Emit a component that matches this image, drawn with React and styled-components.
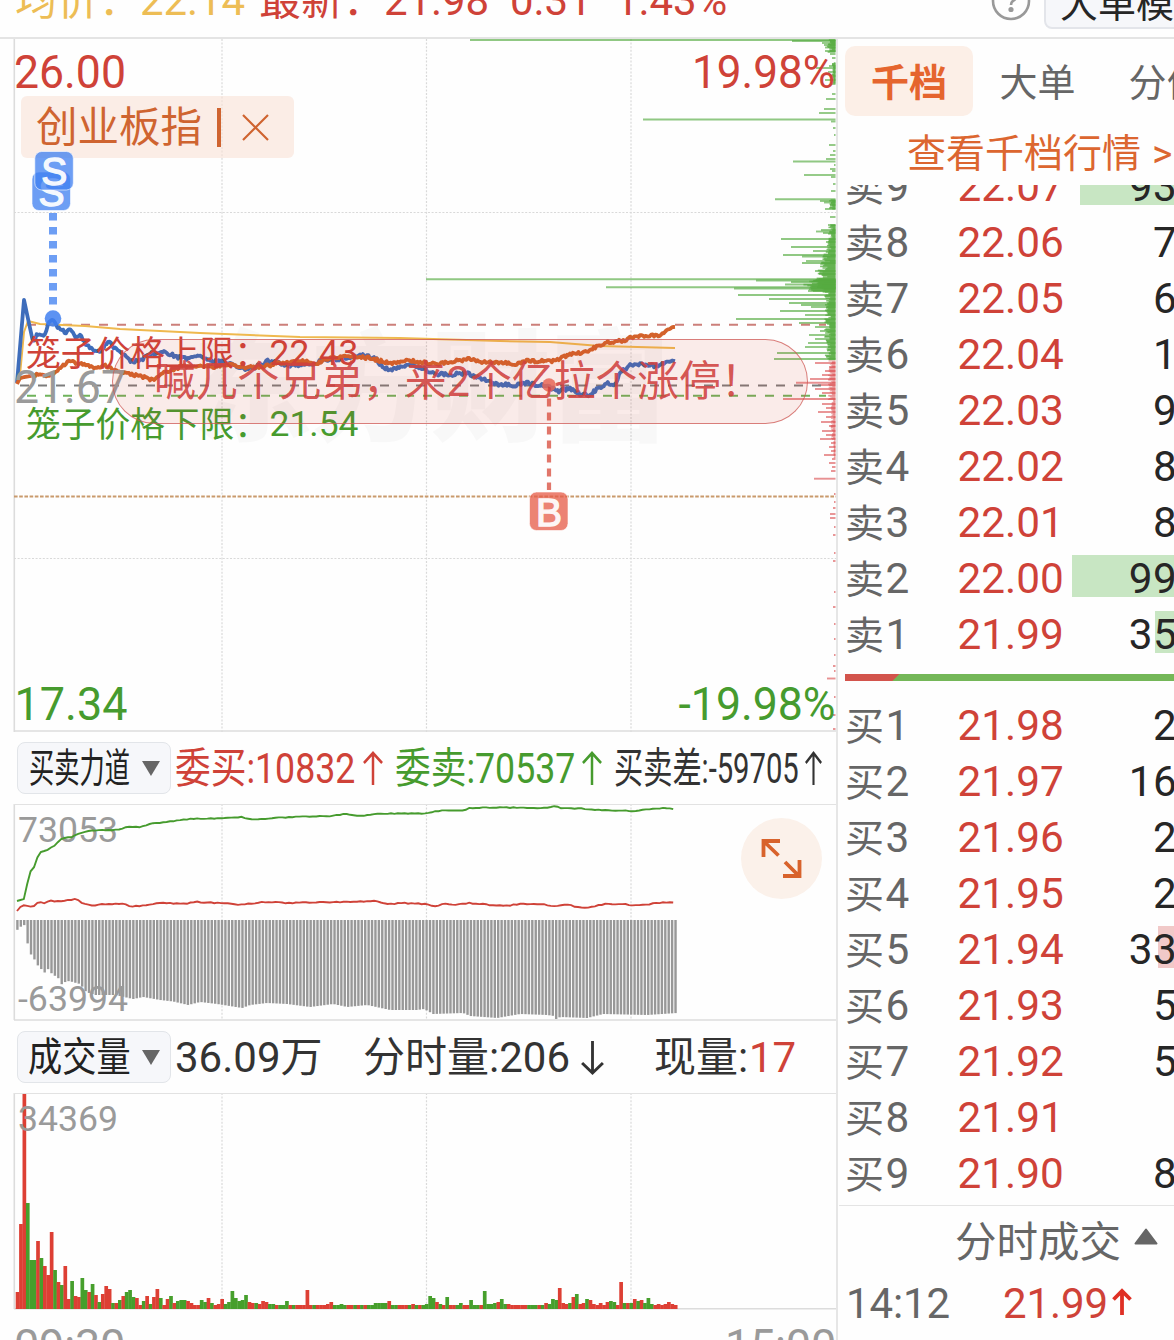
import React from "react";
import styled, { createGlobalStyle, css } from "styled-components";

const RED = "#cf4238";
const GREEN = "#469b2e";
const ORANGE = "#d8632c";
const GREY = "#9a9a9a";

const GlobalStyle = createGlobalStyle`
  * {
    box-sizing: border-box;
  }

  body {
    margin: 0;
    background: #fefefe;
    font-family: Roboto, "Noto Sans CJK SC", sans-serif;
    overflow: hidden;
  }
`;

/* ---------- data ---------- */

const toPoints = (text) => text.split(" ").map((p) => p.split(",").map(Number));

const priceLine = toPoints(
  "17,383 24,300 33,342 37,335 44,336 49,321 53,318 58,328 66,333 70,330 75,337 80,334 86,345 95,351 102,350 108,341 114,347 122,352 130,361 140,361 150,354 165,352 178,357 186,359 197,355 210,361 222,362 235,366 248,369 262,365 268,361 290,366 310,364 330,359 345,359 360,355 375,358 382,366 390,371 400,367 412,364 427,370 435,374 450,375 465,373 480,378 498,384 515,385 525,383 540,385 549,387 558,391 570,389 580,394 590,395 597,389 607,383 616,384 621,371 633,364 647,364 655,366 665,362 675,360"
);
const indexLine = toPoints(
  "17,384 20,378 35,375 50,375 58,370 68,362 80,363 95,368 104,365 112,369 130,374 140,376 152,380 165,372 180,367 197,366 215,367 230,365 245,367 262,367 275,364 300,361 318,363 330,358 345,356 370,358 392,364 407,360 420,362 440,364 455,361 472,359 480,362 500,362 517,364 525,361 553,361 572,354 585,352 607,342 622,341 635,336 660,335 668,329 675,326"
);
const averageLine = "20,375 24,332 28,321 40,324 85,326 120,329 200,333 300,337 400,338 500,341 550,342 600,346 675,348";
const sellForce = toPoints(
  "17,901 24,899 27,885 30,872 35,866 38,855 42,851 48,850 55,845 62,838 72,837 80,833 90,831 105,830 115,830 128,827 140,827 152,823 160,823 190,819 230,818 243,817 246,819 262,819 290,817 330,816 345,814 360,816 380,813.5 426,813.5 435,811 455,810.5 462,811 470,808 500,807.5 540,808 552,807 556,805 560,808.5 580,808.5 600,810 635,811 650,809 665,808 675,809"
);
const buyForce = toPoints(
  "17,911 22,905 33,907 38,902 45,903 50,901 60,901 77,899 82,903 92,906 105,904 115,904 123,903 130,907 145,905 160,903 185,904 195,902 220,903 240,905 262,902 290,903 330,902 345,902 375,901 390,904 400,903 426,904 435,906 445,904 455,905 470,903 490,905 505,906 520,904 545,904 550,906 570,905 580,908 590,907 605,904 620,904 632,905 645,905 655,903 675,902"
);
const forceGap = toPoints(
  "17,930 20,927 24,925 27,942 31,955 34,959 38,966 41,969 45,973 48,969 51,973 55,976 58,978 62,985 65,982 69,981 76,983 80,984 83,988 86,992 95,995 105,995 115,995 133,999 143,997 160,1000 173,1001.5 188,1005 200,1002 217,1004 242,1008 250,1005 267,1003 287,1004 310,1007 333,1004 347,1007 367,1005 390,1010 417,1010 424,1009 433,1014 463,1013 470,1016 497,1018 520,1014 547,1015 554,1016 556,1019 560,1017 587,1018 603,1014 647,1015 677,1013"
);

const volumeBars = (
  "r17 r85 r215 g106 g49 g49 r68 g51 r43 r34 r77 g39 r27 g24 r43 r10 g28 r13 r12 g31 g19 r17 g25 r14 g7 r15 r23 r20 g6 r6 " +
  "g9 r13 g17 g19 g12 r11 r4 g8 r13 g5 r12 r20 g11 r4 r10 g13 r6 g8 g9 g9 r8 r6 r4 r4 g9 g7 r11 g6 r4 r5 " +
  "r10 g5 g7 g18 g11 g8 g9 g14 r7 r6 g6 r5 r8 r7 g5 g5 r4 g4 g4 g8 r4 g4 r4 r4 r4 r19 r4 g4 r4 r4 " +
  "r4 r5 r7 g4 g4 g5 g4 r4 r4 g4 r4 g4 r4 g4 g4 g6 g6 g6 g6 r8 g4 g4 r4 r4 r4 g4 r5 g4 r4 g4 " +
  "g5 g13 g11 r7 g5 r4 g12 r4 r4 g4 g6 r4 r4 g9 g4 g4 r4 g18 g5 g5 g6 r7 g10 g5 r5 r4 r4 r4 r4 r4 " +
  "g4 g4 g4 r4 g4 r6 g5 g10 g9 r21 r6 r5 g6 r12 g15 r5 r6 g10 r9 r5 r4 r6 r4 r7 g8 g7 r4 r27 g6 r6 " +
  "g6 r10 g8 r9 g6 g11 g5 r4 r5 r4 r5 r7 r5 r4"
).split(" ");

// [y, left edge] of the longest resting orders
const sellDepth = toPoints(
  "40,470 41,792 43,822 45,824 47.5,825 51,825 54,830 58,832 66,829 68,816 72,828 76,831 80,825 84,832 94,832 99,826 109,824 113,819 119.5,643 121.5,831 128,833 135,834 145,829 151,833 155,830 159,826 161.5,793 165,834 169,830 171,832 175,804 177,831 184,833 191,831 199.3,775 201,820 202.5,824 205,832 209,825 217,830 225,828 230,821 231.5,816 233,823 239,781 242,826 247,791 251,813 255,783 256.5,802 261,806 263,802 271,815 274,819 279.3,426 280.5,756 282,791 284.5,785 287.3,606 288.5,734 291,808 295,738 299,769 303,789 305,801 307,811 311,780 315,805 319,736 323,799 327,815 331,820 335,809 339,815 343,808 347,805 353,777 359,774"
);
const buyDepth = toPoints(
  "363,815 367,829 371,825 375,822 379,810 382.7,796 385,818 389,815 393,822 399,783 404,822 408,826 412,818 417,826 422,821 426,829 431,822 435,826 439,820 443,831 447,829 451,831 455,824 459,832 463,829 467,832 471,831 478.7,814 494,834 502,834 508,833 514,830 518,830 527,834 535,833 553,834 561,833 592,834 607,833 624,834 639,834 655,834 666,833 671,834 678.5,827 697,834 715,833 729,833"
);

const noise = (n) => {
  const v = Math.sin(n * 12.9898) * 43758.5453;
  return v - Math.floor(v);
};

const valueAt = (points, x) => {
  const i = points.findIndex((p) => p[0] >= x);
  if (i <= 0) return points[i === 0 ? 0 : points.length - 1][1];
  const [x0, y0] = points[i - 1];
  const [x1, y1] = points[i];
  return y0 + ((x - x0) / (x1 - x0)) * (y1 - y0);
};

// Adds tick-by-tick wobble between the key points of a line
const ticks = (points, step, size) => {
  const out = [];
  for (let x = 17; x <= 676; x += step) {
    const wobble = x < 34 ? 0 : (noise(x) - 0.5) * size;
    out.push(`${x.toFixed(1)},${(valueAt(points, x) + wobble).toFixed(1)}`);
  }
  return out.join(" ");
};

const smallOrders = (from, to, width) => {
  const rows = [];
  for (let y = from; y < to; y += 0.8) {
    rows.push([y, 835 - width(y) * (0.4 + noise(y) * 0.8)]);
  }
  return rows;
};

const sellFill = [
  ...smallOrders(40, 52, () => 7),
  ...smallOrders(63, 83, () => 3),
  ...smallOrders(200, 209, () => 5),
  ...smallOrders(225, 240, () => 6),
  ...smallOrders(240, 279, (y) => 7 + (y - 240) * 0.25),
  ...smallOrders(279, 292, () => 27),
  ...smallOrders(280, 290, () => 24),
  ...smallOrders(292, 325, () => 9),
  ...smallOrders(325, 360, () => 9),
];
const buyFill = [
  ...smallOrders(361, 400, () => 6),
  ...smallOrders(400, 440, () => 3.5),
  ...smallOrders(440, 458, () => 1.5),
];

const sellOrders = [
  { level: 9, price: "22.07", qty: "93", bar: 94 },
  { level: 8, price: "22.06", qty: "7" },
  { level: 7, price: "22.05", qty: "6" },
  { level: 6, price: "22.04", qty: "1" },
  { level: 5, price: "22.03", qty: "9" },
  { level: 4, price: "22.02", qty: "8" },
  { level: 3, price: "22.01", qty: "8" },
  { level: 2, price: "22.00", qty: "99", bar: 102 },
  { level: 1, price: "21.99", qty: "35", bar: 19 },
];
const buyOrders = [
  { level: 1, price: "21.98", qty: "2" },
  { level: 2, price: "21.97", qty: "16" },
  { level: 3, price: "21.96", qty: "2" },
  { level: 4, price: "21.95", qty: "2" },
  { level: 5, price: "21.94", qty: "33", bar: 16 },
  { level: 6, price: "21.93", qty: "5" },
  { level: 7, price: "21.92", qty: "5" },
  { level: 8, price: "21.91", qty: "" },
  { level: 9, price: "21.90", qty: "8" },
];

/* ---------- styles ---------- */

const Page = styled.div`
  width: 1174px;
  height: 1340px;
  display: flex;
  flex-direction: column;
  overflow: hidden;
`;

const TopBar = styled.header`
  height: 39px;
  flex: none;
  display: flex;
  align-items: flex-start;
  border-bottom: 2px solid #e4e4e4;
  overflow: hidden;
`;

const QuoteLine = styled.div`
  width: 991px;
  flex: none;
  padding-left: 15px;
  display: grid;
  grid-template-columns: 125px 119px 125px 126px 105px auto;
  margin-top: -32px;
  font-size: 42px;
  line-height: 65px;
  letter-spacing: -0.1px;
  white-space: nowrap;
  color: ${RED};
`;

const Average = styled.span`
  color: #edbd55;
`;

const HelpIcon = styled.svg`
  flex: none;
  width: 40px;
  height: 40px;
  margin-top: -19px;
`;

const ModeButton = styled.div`
  flex: none;
  width: 180px;
  height: 60px;
  margin: -31px 0 0 13px;
  padding-left: 14px;
  background: #f6f7fa;
  border: 2px solid #e3e5ea;
  border-radius: 8px;
  color: #262626;
  font-size: 38px;
  line-height: 66px;
  white-space: nowrap;
`;

const Body = styled.div`
  flex: 1;
  min-height: 0;
  display: flex;
`;

const Charts = styled.main`
  width: 836px;
  flex: none;
  display: flex;
  flex-direction: column;
`;

const ChartBox = styled.section`
  position: relative;
  flex: none;
  height: ${(p) => p.$height}px;

  > svg {
    display: block;
  }
`;

const Chip = styled.div`
  position: absolute;
  left: 21px;
  top: 57px;
  width: 273px;
  height: 62px;
  padding-left: 15px;
  display: flex;
  align-items: center;
  background: rgba(248, 225, 213, 0.6);
  border-radius: 6px;
  color: #cf6430;
  font-size: 41.5px;
  line-height: 60px;

  span {
    padding-top: 2px;
  }
`;

const ChipBar = styled.i`
  width: 4px;
  height: 39px;
  margin: 0 21px 0 15px;
  background: #cf6430;
`;

const Banner = styled.div`
  position: absolute;
  left: 112px;
  top: 300px;
  width: 696px;
  height: 85px;
  padding-left: 41px;
  border: 1.5px solid rgba(206, 88, 84, 0.75);
  border-radius: 43px;
  background: rgba(214, 70, 50, 0.1);
  color: rgba(208, 66, 64, 0.9);
  font-size: 41.8px;
  line-height: 84px;
  white-space: nowrap;
`;

const StatBar = styled.div`
  height: 73px;
  flex: none;
  padding: 1px 0 0 17px;
  display: flex;
  align-items: center;
  color: #333;
  font-size: 42px;
  line-height: 60px;
`;

const Select = styled.div`
  width: 154px;
  height: 52px;
  flex: none;
  padding: 0 10px 0 ${(p) => p.$pad || 11}px;
  margin-right: 4px;
  display: flex;
  align-items: center;
  justify-content: space-between;
  background: #f6f7fa;
  border: 1px solid #e2e5e9;
  border-radius: 8px;
  color: #222;
  font-size: 40px;
`;

// Text narrowed to fit a fixed slot
const Slot = styled.span`
  flex: none;
  width: ${(p) => p.$width}px;
  padding-top: 2px;
  white-space: nowrap;
  margin-left: ${(p) => p.$gap || 0}px;
  color: ${(p) => p.$color || "inherit"};
`;

const Narrow = styled.span`
  display: inline-block;
  transform: scaleX(${(p) => p.$scale});
  transform-origin: left center;
`;

const TimeAxis = styled.footer`
  height: 31px;
  padding: 10px 0 0 14px;
  display: flex;
  justify-content: space-between;
  overflow: hidden;
  color: ${GREY};
  font-size: 45px;
  line-height: 54px;
  letter-spacing: -0.2px;
`;

const Aside = styled.aside`
  flex: 1;
  min-width: 0;
  padding-left: 1px;
  display: flex;
  flex-direction: column;
  border-left: 2px solid #e6e6e6;
  overflow: hidden;
`;

const Tabs = styled.nav`
  height: 80px;
  flex: none;
  padding: 7px 0 0 6px;
  display: flex;
  white-space: nowrap;
`;

const Tab = styled.div`
  flex: none;
  width: 129px;
  height: 70px;
  text-align: center;
  font-size: 38px;
  line-height: 74px;
  border-radius: 10px;
  color: #666;

  ${(p) =>
    p.$active &&
    css`
      width: 128px;
      background: #fcefe7;
      color: #e5652e;
      font-weight: 700;
    `}
`;

const MoreLink = styled.div`
  height: 66px;
  flex: none;
  padding: 0 0 0 68px;
  display: flex;
  gap: 11px;
  color: #dc6630;
  font-size: 39px;
  line-height: 70px;
  white-space: nowrap;
`;

const Book = styled.div`
  height: ${(p) => p.$height}px;
  flex: none;
  display: flex;
  flex-direction: column;
  justify-content: flex-end;
  overflow: hidden;
`;

const OrderRow = styled.div`
  height: 56px;
  flex: none;
  padding-left: 6px;
  display: grid;
  grid-template-columns: 112.5px 109.5px 1fr;
  font-size: 42.3px;
  line-height: 55px;
  white-space: nowrap;
`;

const Level = styled.span`
  color: #666;

  small {
    font-size: 39px;
    margin-right: 1.5px;
  }
`;

const Price = styled.span`
  color: ${RED};
`;

const Qty = styled.span`
  height: 42px;
  margin: 4px -3px 0 0;
  line-height: 47px;
  text-align: right;
  letter-spacing: 0.3px;
  color: #262626;
  background: linear-gradient(${(p) => p.$color}, ${(p) => p.$color}) right / ${(p) => p.$bar}px 100% no-repeat;
`;

const Balance = styled.div`
  flex: none;
  height: 7px;
  margin: 11px 0 17px 6px;
  background: linear-gradient(135deg, #d3544c 38px, #74b758 39px);
`;

const TradesHead = styled.div`
  height: 70px;
  flex: none;
  margin-top: 3px;
  padding: 4px 0 0 116px;
  display: flex;
  align-items: center;
  gap: 13px;
  border-top: 1px solid #e4e4e4;
  color: #666;
  font-size: 41.5px;
  line-height: 60px;

  svg {
    margin-bottom: 12px;
  }
`;

const TradeRow = styled.div`
  display: flex;
  padding-left: 7px;
  font-size: 42px;
  line-height: 58px;
  letter-spacing: -0.1px;
  color: #666;

  b {
    width: 109px;
    font-weight: 400;
    color: ${RED};
    margin-left: 53px;
  }

  svg {
    margin-top: 13px;
  }
`;

/* ---------- small drawings ---------- */

const Arrow = ({ down, color, width = 20 }) => (
  <svg width={width} height="35" viewBox="0 0 21 35" preserveAspectRatio="none" fill="none" stroke={color} strokeWidth="2.6">
    <path d={down ? "M10.5 1V33M1 23L10.5 33L20 23" : "M10.5 34V2M1 12L10.5 2L20 12"} />
  </svg>
);

const Caret = () => (
  <svg width="18" height="15" viewBox="0 0 18 15">
    <path d="M0 0H18L9 15Z" fill="#666" />
  </svg>
);

const Grid = ({ top, bottom }) => (
  <g>
    {[222, 426.5, 631].map((x) => (
      <line key={x} x1={x} x2={x} y1={top} y2={bottom} stroke="#d9d9d9" strokeWidth="1.2" strokeDasharray="2 1.6" />
    ))}
    <line x1="14.3" x2="14.3" y1={top} y2={bottom} stroke="#dcdcdc" strokeWidth="1.6" />
  </g>
);

const Label = ({ x, y, size = 46, width, color, children }) => (
  <text x={x} y={y} fontSize={size} textLength={width} lengthAdjust="spacingAndGlyphs" fill={color}>
    {children}
  </text>
);

const TagLetter = styled.text`
  font-family: "Liberation Sans", Arial, sans-serif;
  font-size: 39px;
  text-anchor: middle;
  fill: #fff;
  stroke: #fff;
  stroke-width: 1.4px;
  opacity: 0.93;
`;

const Tag = ({ x, y, letter, color }) => (
  <g>
    <rect x={x} y={y} width="38.5" height="38.5" rx="7" fill={color} fillOpacity="0.76" stroke="#fff" strokeOpacity="0.6" />
    <TagLetter x={x + 19.4} y={y + 33.5}>{letter}</TagLetter>
  </g>
);

const Depth = ({ rows, color, opacity, width = 1.9 }) => (
  <g stroke={color} strokeOpacity={opacity} strokeWidth={width}>
    {rows.map(([y, x], i) => (
      <line key={i} x1={x} x2="835.5" y1={y} y2={y} />
    ))}
  </g>
);

/* ---------- sections ---------- */

const PriceChart = () => (
  <ChartBox $height={692}>
    <svg width="836" height="693" viewBox="0 39 836 693">
      <Grid top={39} bottom={732} />
      <g stroke="#d9d9d9" strokeWidth="1.2" strokeDasharray="2 1.6">
        <line x1="14" x2="836" y1="212.5" y2="212.5" />
        <line x1="14" x2="836" y1="558.5" y2="558.5" />
      </g>
      <line x1="14" x2="836" y1="731" y2="731" stroke="#dcdcdc" strokeWidth="1.6" />
      <text x="192" y="431" fontSize="121" fontWeight="900" textLength="478" fill="#000" fillOpacity="0.022">
        东方财富
      </text>
      <Depth rows={sellDepth} color="#55ab40" opacity={0.65} />
      <Depth rows={sellFill} color="#55ab40" opacity={0.75} width={1.6} />
      <Depth rows={buyDepth} color="#d9474a" opacity={0.6} />
      <Depth rows={buyFill} color="#d9474a" opacity={0.45} width={1.2} />
      <g strokeWidth="1.9" strokeDasharray="9 9">
        <line x1="27" x2="826" y1="324.7" y2="324.7" stroke="#cc7f7a" />
        <line x1="20" x2="826" y1="385.5" y2="385.5" stroke="#7c7c7c" />
        <line x1="27" x2="826" y1="395.7" y2="395.7" stroke="#6fb35c" />
      </g>
      <line x1="14" x2="836" y1="496.5" y2="496.5" stroke="#c99a6c" strokeWidth="1.9" strokeDasharray="3.6 1.6" />
      <g fill="none" strokeLinejoin="round">
        <polyline points={averageLine} stroke="#efb94e" strokeWidth="2" />
        <polyline points={ticks(priceLine, 1.4, 3.6)} stroke="#3e6dbb" strokeWidth="3.8" />
        <polyline points={ticks(indexLine, 1.4, 3)} stroke="#d3622b" strokeWidth="3.8" />
      </g>
      <line x1="53" x2="53" y1="213" y2="306" stroke="#3f7ff0" strokeOpacity="0.76" strokeWidth="8" strokeDasharray="7.6 6.4" />
      <circle cx="53" cy="318.5" r="8.3" fill="#3f7ff0" fillOpacity="0.85" />
      <Label x={14} y={88} width={112} color={RED}>26.00</Label>
      <Label x={692} y={88} width={143} color={RED}>19.98%</Label>
      <Label x={14} y={403} width={112} color={GREY}>21.67</Label>
      <Label x={14.5} y={719.5} width={113} color={GREEN}>17.34</Label>
      <Label x={678.5} y={719.5} width={157} color={GREEN}>-19.98%</Label>
      <Label x={26} y={366} size={35} width={243} color={RED}>笼子价格上限：</Label>
      <Label x={269.5} y={365} size={35.5} width={89} color={RED}>22.43</Label>
      <Label x={26} y={437} size={35} width={243} color={GREEN}>笼子价格下限：</Label>
      <Label x={269.5} y={436} size={35.5} width={89} color={GREEN}>21.54</Label>
      <line x1="549" x2="549" y1="398.5" y2="490" stroke="#e1766a" strokeWidth="4.2" strokeDasharray="8 6" />
      <circle cx="549" cy="385" r="6.8" fill="#ea6b5a" fillOpacity="0.85" />
      <Tag x={529.5} y={492} letter="B" color="#e65c48" />
    </svg>
    <Chip>
      <span>创业板指</span>
      <ChipBar />
      <svg width="27" height="27" viewBox="0 0 27 27" stroke="#cf6430" strokeWidth="2.2">
        <path d="M1 1L26 26M26 1L1 26" />
      </svg>
    </Chip>
    <Banner>喊几个兄弟，来2个亿拉个涨停！</Banner>
    <Markers width="60" height="66" viewBox="20 148 60 66">
      <Tag x={32} y={172} letter="S" color="#3f7ff0" />
      <Tag x={34.8} y={151.5} letter="S" color="#3f7ff0" />
    </Markers>
  </ChartBox>
);

const Markers = styled.svg`
  position: absolute;
  left: 20px;
  top: 109px;
`;

const ExpandButton = styled.div`
  position: absolute;
  left: 741px;
  top: 14px;
  width: 81px;
  height: 81px;
  display: flex;
  align-items: center;
  justify-content: center;
  border-radius: 50%;
  background: #fbf1ea;
`;

const ForceChart = () => (
  <ChartBox $height={216}>
    <svg width="836" height="217" viewBox="0 804 836 217">
      <Grid top={804} bottom={1020} />
      <line x1="14" x2="836" y1="804.5" y2="804.5" stroke="#e2e2e2" />
      <line x1="14" x2="836" y1="1020" y2="1020" stroke="#dcdcdc" strokeWidth="1.6" />
      {Array.from({ length: 194 }, (_, i) => {
        const x = 16.2 + i * 3.41;
        return <rect key={i} x={x} y="920" width="2.4" height={valueAt(forceGap, x + 1) - 920} fill="#989898" />;
      })}
      <Label x={18} y={842} size={34.5} width={100} color={GREY}>73053</Label>
      <Label x={18} y={1011} size={34.5} width={110} color={GREY}>-63994</Label>
      <polyline points={ticks(sellForce, 3.4, 0.8)} fill="none" stroke={GREEN} strokeWidth="1.9" />
      <polyline points={ticks(buyForce, 3.4, 1)} fill="none" stroke={RED} strokeWidth="1.9" />
    </svg>
    <ExpandButton>
      <svg width="41" height="41" viewBox="0 0 41 41" fill="none" stroke={ORANGE} strokeWidth="3.8">
        <path d="M2.5 19V3H19M3 3.500L17.500 17.500M24 24L38 38M22 38H38.500V22" />
      </svg>
    </ExpandButton>
  </ChartBox>
);

const VolumeChart = () => (
  <ChartBox $height={216}>
    <svg width="836" height="217" viewBox="0 1093 836 217">
      <Grid top={1093} bottom={1309} />
      <line x1="14" x2="836" y1="1093.5" y2="1093.5" stroke="#e2e2e2" />
      <line x1="14" x2="836" y1="1308.8" y2="1308.8" stroke="#dcdcdc" strokeWidth="1.6" />
      {volumeBars.map((bar, i) => {
        const size = Number(bar.slice(1));
        return (
          <rect
            key={i}
            x={15.7 + i * 3.41}
            y={1309 - size}
            width="3.7"
            height={size}
            fill={bar[0] === "r" ? "#dd3f34" : "#469f2c"}
          />
        );
      })}
      <Label x={18} y={1131} size={34.5} width={100} color={GREY}>34369</Label>
    </svg>
  </ChartBox>
);

const Orders = ({ side, rows, color }) =>
  rows.map((row) => (
    <OrderRow key={row.level}>
      <Level>
        <small>{side}</small>
        {row.level}
      </Level>
      <Price>{row.price}</Price>
      <Qty $bar={row.bar ? row.bar + 3 : 0} $color={color}>{row.qty}</Qty>
    </OrderRow>
  ));

const App = () => {
  return (
    <Page>
      <GlobalStyle />
      <TopBar>
        <QuoteLine>
          <Average>均价：</Average>
          <Average>22.14</Average>
          <span>最新：</span>
          <span>21.98</span>
          <span>0.31</span>
          <span>1.43%</span>
        </QuoteLine>
        <HelpIcon viewBox="0 0 40 40" fill="none" stroke="#999" strokeWidth="2.6">
          <circle cx="20" cy="20" r="18" />
          <path d="M14.500 15A5.500 5.500 0 1 1 22.500 19.500C20.700 20.500 20 21.500 20 24" />
          <circle cx="20" cy="28.500" r="1.300" fill="#999" />
        </HelpIcon>
        <ModeButton>大单模式</ModeButton>
      </TopBar>
      <Body>
        <Charts>
          <PriceChart />
          <StatBar>
            <Select>
              <Slot $width={101}><Narrow $scale={0.632}>买卖力道</Narrow></Slot>
              <Caret />
            </Select>
            <Slot $width={188} $color={RED}><Narrow $scale={0.85}>委买:10832</Narrow></Slot>
            <Arrow color={RED} />
            <Slot $width={187} $gap={12} $color={GREEN}><Narrow $scale={0.85}>委卖:70537</Narrow></Slot>
            <Arrow color={GREEN} />
            <Slot $width={191} $gap={12}><Narrow $scale={0.695}>买卖差:-59705</Narrow></Slot>
            <Arrow color="#333" width={17} />
          </StatBar>
          <ForceChart />
          <StatBar>
            <Select $pad={10}>
              <Slot $width={102}><Narrow $scale={0.855}>成交量</Narrow></Slot>
              <Caret />
            </Select>
            <Slot $width={188}>36.09万</Slot>
            <Slot $width={218}>分时量:206</Slot>
            <Arrow down color="#333" width={23} />
            <Slot $width={95} $gap={50}>现量:</Slot>
            <Slot $color={RED}>17</Slot>
          </StatBar>
          <VolumeChart />
          <TimeAxis>
            <span>09:30</span>
            <span>15:00</span>
          </TimeAxis>
        </Charts>
        <Aside>
          <Tabs>
            <Tab $active>千档</Tab>
            <Tab>大单</Tab>
            <Tab>分价</Tab>
          </Tabs>
          <MoreLink>
            <span>查看千档行情</span>
            <span>&gt;</span>
          </MoreLink>
          <Book $height={478}>
            <Orders side="卖" rows={sellOrders} color="#c8e6c3" />
          </Book>
          <Balance />
          <Book $height={504}>
            <Orders side="买" rows={buyOrders} color="#f1c9c8" />
          </Book>
          <TradesHead>
            分时成交
            <svg width="24" height="17" viewBox="0 0 24 17">
              <path d="M12 1.500L22.500 15.500H1.500Z" fill="#666" stroke="#666" strokeWidth="2" strokeLinejoin="round" />
            </svg>
          </TradesHead>
          <TradeRow>
            <span>14:12</span>
            <b>21.99</b>
            <svg width="20" height="28" viewBox="0 0 20 28" fill="none" stroke="#df3025" strokeWidth="3.8">
              <path d="M10 27V3M1.500 11.500L10 3L18.500 11.500" />
            </svg>
          </TradeRow>
        </Aside>
      </Body>
    </Page>
  );
};

export default App;
